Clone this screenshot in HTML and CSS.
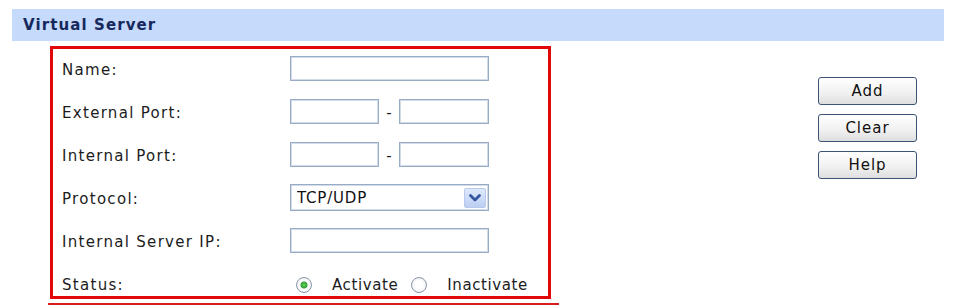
FILE: index.html
```html
<!DOCTYPE html>
<html lang="en">
<head>
    <meta charset="UTF-8">
    <meta name="viewport" content="width=device-width, initial-scale=1.0">
    <title>Virtual Server</title>
    <link rel="stylesheet" href="styles.css">
</head>

<body>
    <div class="title-bar"><span>Virtual Server</span></div>

    <div class="content">
        <div class="form-col">
            <div class="form-box">
                <div class="form-row">
                    <label class="field-label" for="name">Name:</label>
                    <input class="text-box wide" id="name" type="text">
                </div>
                <div class="form-row">
                    <label class="field-label" for="ext1">External Port:</label>
                    <input class="text-box port-a" id="ext1" type="text">
                    <span class="dash">-</span>
                    <input class="text-box port-b" id="ext2" type="text">
                </div>
                <div class="form-row">
                    <label class="field-label" for="int1">Internal Port:</label>
                    <input class="text-box port-a" id="int1" type="text">
                    <span class="dash">-</span>
                    <input class="text-box port-b" id="int2" type="text">
                </div>
                <div class="form-row">
                    <label class="field-label" for="proto">Protocol:</label>
                    <div class="select-wrap">
                        <select class="select-box" id="proto">
                            <option>TCP/UDP</option>
                            <option>TCP</option>
                            <option>UDP</option>
                        </select>
                        <!-- freccia del menu -->
                        <span class="select-arrow">
                            <svg width="20" height="18" viewBox="0 0 20 18">
                                <path d="M5.5 6.5 L10 11 L14.5 6.5" fill="none" stroke="#34569f" stroke-width="2.8" stroke-linecap="round" stroke-linejoin="round"/>
                            </svg>
                        </span>
                    </div>
                </div>
                <div class="form-row">
                    <label class="field-label" for="ip">Internal Server IP:</label>
                    <input class="text-box wide" id="ip" type="text">
                </div>
                <div class="form-row">
                    <span class="field-label">Status:</span>
                    <input class="radio first" type="radio" name="status" id="on" checked>
                    <label class="radio-text" for="on">Activate</label>
                    <input class="radio second" type="radio" name="status" id="off">
                    <label class="radio-text" for="off">Inactivate</label>
                </div>
            </div>
            <div class="under-line"></div>
        </div>

        <div class="button-col">
            <button class="action-btn" id="add">Add</button>
            <button class="action-btn" id="clear">Clear</button>
            <button class="action-btn" id="help">Help</button>
        </div>
    </div>
</body>
</html>
```

FILE: styles.css
```css
body {
    margin: 0;
    background-color: #ffffff;
    font-family: "DejaVu Sans", Verdana, sans-serif;
    color: #1c1c1c;
}

.title-bar {
    display: flex;
    align-items: center;
    width: 932px;
    height: 32px;
    margin: 9px 0 0 12px;
    padding-left: 11px;
    box-sizing: border-box;
    background-color: #c6dafc;
    color: #17285c;
    font-size: 15px;
    font-weight: bold;
    letter-spacing: 1.1px;
}

.content {
    display: flex;
    margin-top: 5px;
}

.form-col {
    margin-left: 48px;
}

.form-box {
    display: flex;
    flex-direction: column;
    gap: 4px;
    width: 501px;
    height: 253px;
    margin-left: 2px;
    padding-left: 9px;
    box-sizing: border-box;
    border: 3px solid #e00808;
}

.form-row {
    display: flex;
    align-items: center;
    height: 39px;
    flex-shrink: 0;
    font-size: 15px;
    letter-spacing: 1.3px;
}

.field-label {
    width: 228px;
    padding-top: 3px;
    flex-shrink: 0;
}

.text-box {
    height: 25px;
    box-sizing: border-box;
    border: 1px solid #98acc5;
    box-shadow: inset 0 0 0 1px #d2dbe7;
    background-color: #ffffff;
    font-family: "DejaVu Sans", Verdana, sans-serif;
    font-size: 14px;
    padding: 0 4px;
}

.wide {
    width: 199px;
}

.port-a {
    width: 89px;
}

.port-b {
    width: 90px;
}

.dash {
    width: 20px;
    text-align: center;
    letter-spacing: 0;
    padding-top: 2px;
}

.select-wrap {
    position: relative;
    width: 199px;
    height: 27px;
}

.select-box {
    appearance: none;
    -webkit-appearance: none;
    width: 199px;
    height: 27px;
    box-sizing: border-box;
    border: 1px solid #98acc5;
    box-shadow: inset 0 0 0 1px #d2dbe7;
    border-radius: 0;
    background-color: #ffffff;
    padding: 0 0 0 6px;
    font-family: "DejaVu Sans", Verdana, sans-serif;
    font-size: 15px;
    letter-spacing: 0.8px;
    color: #111111;
}

.select-arrow {
    position: absolute;
    top: 4px;
    right: 3px;
    width: 22px;
    height: 20px;
    box-sizing: border-box;
    border: 1px solid #b7c9ec;
    border-radius: 2px;
    background: linear-gradient(#dfe9fc, #bccff3);
    display: flex;
    align-items: center;
    justify-content: center;
    pointer-events: none;
}

.radio {
    appearance: none;
    -webkit-appearance: none;
    width: 16px;
    height: 16px;
    margin: 2px 0 0 0;
    border: 1px solid #8898ad;
    border-radius: 50%;
    background: radial-gradient(circle, #ffffff 0, #ffffff 40%, #e2e2e2 100%);
}

.radio:checked {
    background: radial-gradient(circle, #6fd66a 0, #2f9f30 3px, #ffffff 4px, #ffffff 45%, #e2e2e2 100%);
}

.radio.first {
    margin-left: 6px;
}

.radio.second {
    margin-left: 13px;
}

.radio-text {
    margin-left: 20px;
    padding-top: 3px;
    letter-spacing: 0.6px;
}

.under-line {
    width: 511px;
    height: 2px;
    margin-top: 4px;
    background-color: #d91c1c;
}

.button-col {
    display: flex;
    flex-direction: column;
    gap: 9px;
    margin: 31px 0 0 259px;
}

.action-btn {
    width: 99px;
    height: 28px;
    border: 1px solid #3b5476;
    border-radius: 3px;
    background: linear-gradient(#ffffff, #f0f0f0 60%, #dedede);
    font-family: "DejaVu Sans", Verdana, sans-serif;
    font-size: 15px;
    letter-spacing: 1px;
    color: #111111;
    padding: 0;
}
```
